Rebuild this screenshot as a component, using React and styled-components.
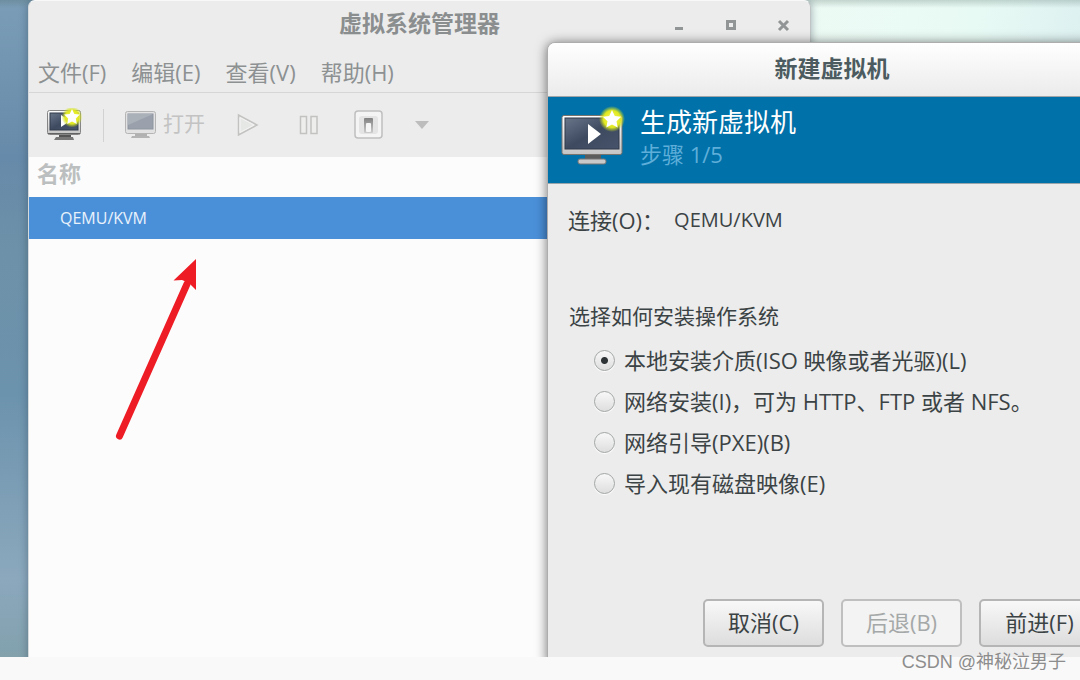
import React from 'react';
import styled, { createGlobalStyle, css } from 'styled-components';

const GlobalStyle = createGlobalStyle`
  *, *::before, *::after { box-sizing: border-box; }
  body {
    margin: 0;
    background: #f9f9f9;
    font-family: 'Open Sans', 'Noto Sans CJK SC', sans-serif;
    font-size: 22px;
    line-height: 30px;
    color: #3b4345;
  }
  button, input { font: inherit; color: inherit; }
`;

const Page = styled.div`
  position: relative;
  display: flex;
  flex-direction: column;
  height: 100vh;
  overflow: hidden;
`;

const Desktop = styled.main`
  position: relative;
  flex: 1;
  overflow: hidden;
  background:
    linear-gradient(to bottom, rgba(70, 100, 90, 0.25), transparent 8px),
    linear-gradient(100deg, transparent 40%, #f0fbf5 60%, #e8faf4 82%, #d7ecef 96%),
    linear-gradient(to bottom, #7b9db7 0%, #668aa9 24%, #6d91a8 38%, #6c93ad 60%, #8ba8bd 88%, #82a1ad 100%);
`;

const Footer = styled.footer`
  height: 23px;
  background: #f9f9f9;
`;

const Watermark = styled.span`
  position: absolute;
  right: 14px;
  bottom: 6px;
  font-family: 'Liberation Sans', 'Noto Sans CJK SC', sans-serif;
  font-size: 18px;
  line-height: 24px;
  color: #8d8d8d;
  white-space: nowrap;
`;

const Window = styled.section`
  position: absolute;
  display: flex;
  flex-direction: column;
  background: #ececec;
`;

const ManagerWindow = styled(Window)`
  top: 0;
  bottom: -8px;
  left: 28px;
  width: 783px;
  border: 1px solid #c0c4c4;
  border-top-color: #f8f8f8;
  border-left-color: #d5dadd;
  border-radius: 7px 7px 0 0;
  overflow: hidden;
  box-shadow: 0 0 8px rgba(30, 50, 70, 0.4);
`;

const DialogWindow = styled(Window)`
  top: 42px;
  bottom: -8px;
  left: 547px;
  width: 570px;
  border: 1px solid #adadad;
  border-radius: 8px 8px 0 0;
  overflow: hidden;
  box-shadow: 0 1px 12px rgba(0, 0, 0, 0.55);
`;

const TitleBar = styled.header`
  display: grid;
  grid-template-columns: 1fr auto 1fr;
  align-items: center;
  height: 48px;
`;

const WindowTitle = styled.h1`
  grid-column: 2;
  margin: 0;
  padding-bottom: 4px;
  font-size: 23px;
  line-height: 30px;
  font-weight: 700;
  color: ${(p) => p.$color};
`;

const WindowControls = styled.div`
  display: flex;
  justify-content: flex-end;
  gap: 32px;
  padding-right: 17px;
`;

const bareButton = css`
  display: flex;
  align-items: center;
  justify-content: center;
  padding: 0;
  border: 0;
  background: none;
`;

const ControlButton = styled.button`
  ${bareButton}
  width: 20px;
  height: 20px;
`;

const MenuBar = styled.nav`
  display: flex;
  gap: 25px;
  height: 44px;
  padding: 8px 9px 0;
  border-bottom: 1px solid #d6d6d6;
`;

const MenuButton = styled.button`
  ${bareButton}
  height: 30px;
  color: #8d9192;
`;

const Toolbar = styled.div`
  display: flex;
  align-items: center;
  height: 64px;
  padding-left: 18px;
`;

const ToolButton = styled.button`
  ${bareButton}
  gap: 6px;
  height: 40px;
  margin-right: ${(p) => p.$after}px;
  font-size: 21px;
  color: #c3c3c3;
`;

const ToolLabel = styled.span`
  padding-bottom: 4px;
`;

const Separator = styled.span`
  width: 1px;
  height: 33px;
  margin-right: 21px;
  background: #d2d2d2;
`;

const ConnectionTable = styled.table`
  width: 100%;
  border-collapse: collapse;
  text-align: left;
`;

const ListArea = styled.div`
  flex: 1;
  background: #fcfcfc;
`;

const HeadCell = styled.th`
  height: 40px;
  padding: 0 8px 8px;
  font-weight: 700;
  color: #bcbfbf;
`;

const ConnectionCell = styled.td`
  height: 42px;
  padding: 0 31px;
  background: #4a90d9;
  color: #e9f2fb;
  font-size: 16px;
`;

const DialogTitleBar = styled(TitleBar)`
  height: 54px;
  border-bottom: 1px solid #a0a6a8;
  background: linear-gradient(#ffffff, #ebebeb);
`;

const Banner = styled.div`
  display: flex;
  align-items: flex-start;
  gap: 14px;
  height: 87px;
  padding: 9px 13px;
  border-bottom: 1px solid #98a5ab;
  background: #0071a9;
`;

const BannerTitle = styled.h2`
  margin: 0;
  font-size: 26px;
  line-height: 32px;
  font-weight: 400;
  color: #ffffff;
`;

const BannerStep = styled.p`
  margin: 0;
  line-height: 32px;
  color: #5eaed9;
`;

const DialogBody = styled.div`
  flex: 1;
  display: flex;
  flex-direction: column;
  padding: 21px 16px 17px 20px;
`;

const ConnectionLine = styled.div`
  display: flex;
  gap: 10px;
`;

const ConnectionValue = styled.output`
  font-size: 20px;
`;

const InstallOptions = styled.fieldset`
  display: flex;
  flex-direction: column;
  min-width: 0;
  margin: 66px 0 0;
  padding: 0;
  border: 0;
`;

const OptionsLegend = styled.legend`
  margin-bottom: 9px;
  padding: 0 0 0 1px;
  font-size: 21px;
`;

const Option = styled.label`
  display: flex;
  align-items: center;
  gap: 9px;
  height: 41px;
  padding-left: 26px;
  white-space: nowrap;
`;

const OptionText = styled.span`
  padding-bottom: 2px;
`;

const Radio = styled.input`
  appearance: none;
  width: 21px;
  height: 21px;
  margin: 0;
  border: 1px solid #a3a6a6;
  border-radius: 50%;
  background: linear-gradient(#f8f8f8, #dedede);
  box-shadow: 0 1px 1px #ffffff;

  &:checked {
    background: radial-gradient(circle, #2e3436 0 3px, transparent 4px), linear-gradient(#f8f8f8, #dedede);
  }
`;

const Actions = styled.div`
  display: flex;
  justify-content: flex-end;
  gap: 17px;
  margin-top: auto;
`;

const ActionButton = styled.button`
  width: 121px;
  height: 48px;
  padding: 0 0 2px;
  border: 2px solid #b5b5b5;
  border-radius: 5px;
  background: linear-gradient(#f8f8f8, #dddddd);

  &:disabled {
    border-color: #bfbfbf;
    background: #f3f3f3;
    color: #a5a8a8;
  }
`;

const PointerArrow = styled.svg`
  position: absolute;
  top: 256px;
  left: 112px;
`;

function Star() {
  return (
    <g>
      <circle cx="51" cy="13" r="13" fill="url(#glow)" />
      <path
        d="M51 4l2.8 5.9 6.4.8-4.7 4.5 1.2 6.4-5.7-3.1-5.7 3.1 1.2-6.4-4.7-4.5 6.4-.8z"
        fill="#fff"
      />
    </g>
  );
}

function Gradients() {
  return (
    <svg width="0" height="0" display="block" aria-hidden="true">
      <defs>
        <radialGradient id="glow">
          <stop offset="0" stopColor="#f8f860" />
          <stop offset=".65" stopColor="#dfe820" />
          <stop offset="1" stopColor="#c8dc20" stopOpacity="0" />
        </radialGradient>
        <linearGradient id="frame" x1="0" y1="0" x2="0" y2="1">
          <stop offset="0" stopColor="#ffffff" />
          <stop offset="1" stopColor="#c4c4c4" />
        </linearGradient>
        <linearGradient id="screen" x1="0" y1="0" x2="1" y2="1">
          <stop offset="0" stopColor="#69768a" />
          <stop offset=".5" stopColor="#3d4a60" />
          <stop offset="1" stopColor="#46536a" />
        </linearGradient>
        <linearGradient id="switchFace" x1="0" y1="0" x2="0" y2="1">
          <stop offset="0" stopColor="#808080" />
          <stop offset="1" stopColor="#cdcdcd" />
        </linearGradient>
      </defs>
    </svg>
  );
}

function NewMachineLarge() {
  return (
    <svg width="65" height="60" viewBox="0 0 65 60" aria-hidden="true">
      <path d="M24 49h16v5H24z" fill="#5c5c5c" />
      <rect x="17" y="53" width="28" height="5" rx="2" fill="#c9c9c9" stroke="#747474" />
      <rect x="1" y="9.500" width="60" height="39" rx="2" fill="url(#frame)" stroke="#77736f" />
      <rect x="4" y="12" width="54" height="31" fill="url(#screen)" stroke="#303a4a" />
      <path d="M27 18v20l13-10z" fill="#fff" />
      <Star />
    </svg>
  );
}

function NewMachineSmall() {
  return (
    <svg width="36" height="34" viewBox="0 0 36 34" aria-hidden="true">
      <path d="M12 26h12v3H12z" fill="#555" />
      <path d="M9 29h17l1 3H7z" fill="#777" />
      <rect x=".500" y="2.500" width="33" height="24" rx="2" fill="url(#frame)" stroke="#858585" />
      <path d="M1 25.500h32" stroke="#626262" />
      <rect x="3" y="5" width="28" height="17" fill="url(#screen)" stroke="#303a4a" />
      <path d="M14 7v12l9-6z" fill="#fff" />
      <circle cx="25" cy="9" r="10.500" fill="url(#glow)" />
      <path d="M25 1l2.300 4.900 5.500.7-4 3.900 1 5.500-4.800-2.600-4.800 2.600 1-5.500-4-3.900 5.500-.7z" fill="#fff" />
    </svg>
  );
}

function MonitorIcon() {
  return (
    <svg width="32" height="30" viewBox="0 0 32 30" aria-hidden="true">
      <path d="M10 23h12v3H10z" fill="#b1b1b1" />
      <path d="M7 26h17l1 2H6z" fill="#b4b4b4" />
      <rect x=".500" y="1.500" width="30" height="22" rx="2" fill="#e2e2e2" stroke="#b5b5b5" />
      <rect x="3" y="4" width="25" height="15" fill="#9aa1ac" stroke="#8d949f" />
      <path d="M3 4h25L3 15z" fill="#abb1b9" />
    </svg>
  );
}

function PlayIcon() {
  return (
    <svg width="22" height="24" viewBox="0 0 22 24" aria-hidden="true">
      <path d="M1.500 2v20L20 12z" fill="#e6e8e6" stroke="#c2c2c0" strokeWidth="1.500" />
      <path d="M3 4.500v15L17 12z" fill="none" stroke="#f4f4f4" />
    </svg>
  );
}

function PauseIcon() {
  return (
    <svg width="20" height="20" viewBox="0 0 20 20" aria-hidden="true">
      <path d="M1.500 1.500h6v17h-6zM12 1.500h6v17h-6z" fill="#eeeeec" stroke="#c2c2c0" strokeWidth="1.500" />
    </svg>
  );
}

function PowerIcon() {
  return (
    <svg width="29" height="31" viewBox="0 0 29 31" aria-hidden="true">
      <rect x="1" y="1" width="27" height="27" rx="3" fill="#f4f4f4" stroke="#bfbfbf" strokeWidth="1.500" />
      <rect x="5" y="6" width="19" height="18" rx="3" fill="#e4e4e4" />
      <rect x="10" y="8" width="9" height="15" rx="1" fill="url(#switchFace)" />
      <rect x="12" y="13" width="5" height="9" rx="1" fill="#f5f5f5" />
    </svg>
  );
}

function CaretIcon() {
  return (
    <svg width="14" height="8" viewBox="0 0 14 8" aria-hidden="true">
      <path d="M0 0h14L7 8z" fill="#bdbdbd" />
    </svg>
  );
}

const controls = [
  { name: '最小化', mark: <path d="M6 13.500h8" strokeWidth="3" /> },
  { name: '最大化', mark: <path d="M6.500 6.500h7v7h-7z" strokeWidth="3" /> },
  { name: '关闭', mark: <path d="M6 6l9 9M15 6l-9 9" strokeWidth="3" /> },
];

const menus = ['文件(F)', '编辑(E)', '查看(V)', '帮助(H)'];

const installOptions = [
  { id: 'local', label: '本地安装介质(ISO 映像或者光驱)(L)' },
  { id: 'network', label: '网络安装(I)，可为 HTTP、FTP 或者 NFS。' },
  { id: 'pxe', label: '网络引导(PXE)(B)' },
  { id: 'import', label: '导入现有磁盘映像(E)' },
];

function Manager() {
  return (
    <ManagerWindow aria-label="虚拟系统管理器">
      <TitleBar>
        <WindowTitle $color="#8b8e8f">虚拟系统管理器</WindowTitle>
        <WindowControls>
          {controls.map((c) => (
            <ControlButton key={c.name} type="button" aria-label={c.name}>
              <svg width="20" height="20" viewBox="0 0 20 20" fill="none" stroke="#929595" aria-hidden="true">
                {c.mark}
              </svg>
            </ControlButton>
          ))}
        </WindowControls>
      </TitleBar>
      <MenuBar>
        {menus.map((m) => (
          <MenuButton key={m} type="button">{m}</MenuButton>
        ))}
      </MenuBar>
      <Toolbar>
        <ToolButton type="button" aria-label="新建虚拟机" $after={20}><NewMachineSmall /></ToolButton>
        <Separator />
        <ToolButton type="button" disabled $after={32}><MonitorIcon /><ToolLabel>打开</ToolLabel></ToolButton>
        <ToolButton type="button" disabled aria-label="运行" $after={40}><PlayIcon /></ToolButton>
        <ToolButton type="button" disabled aria-label="暂停" $after={35}><PauseIcon /></ToolButton>
        <ToolButton type="button" disabled aria-label="关机" $after={32}><PowerIcon /></ToolButton>
        <ToolButton type="button" disabled aria-label="关机选项" $after={0}><CaretIcon /></ToolButton>
      </Toolbar>
      <ListArea>
        <ConnectionTable>
          <thead>
            <tr><HeadCell scope="col">名称</HeadCell></tr>
          </thead>
          <tbody>
            <tr><ConnectionCell>QEMU/KVM</ConnectionCell></tr>
          </tbody>
        </ConnectionTable>
      </ListArea>
    </ManagerWindow>
  );
}

function NewMachineDialog() {
  return (
    <DialogWindow role="dialog" aria-label="新建虚拟机">
      <DialogTitleBar>
        <WindowTitle $color="#4c5b60">新建虚拟机</WindowTitle>
      </DialogTitleBar>
      <Banner>
        <NewMachineLarge />
        <div>
          <BannerTitle>生成新虚拟机</BannerTitle>
          <BannerStep>步骤 1/5</BannerStep>
        </div>
      </Banner>
      <DialogBody>
        <ConnectionLine>
          <label htmlFor="connection">连接(O)：</label>
          <ConnectionValue id="connection">QEMU/KVM</ConnectionValue>
        </ConnectionLine>
        <InstallOptions>
          <OptionsLegend>选择如何安装操作系统</OptionsLegend>
          {installOptions.map((o, i) => (
            <Option key={o.id} htmlFor={o.id}>
              <Radio type="radio" name="install" id={o.id} defaultChecked={i === 0} />
              <OptionText>{o.label}</OptionText>
            </Option>
          ))}
        </InstallOptions>
        <Actions>
          <ActionButton type="button">取消(C)</ActionButton>
          <ActionButton type="button" disabled>后退(B)</ActionButton>
          <ActionButton type="button">前进(F)</ActionButton>
        </Actions>
      </DialogBody>
    </DialogWindow>
  );
}

export default function App() {
  return (
    <Page>
      <GlobalStyle />
      <Gradients />
      <Desktop>
        <Manager />
        <PointerArrow width="90" height="188" viewBox="0 0 90 188" aria-hidden="true">
          <path d="M7.500 180L75 28" stroke="#ee1c25" strokeWidth="7" strokeLinecap="round" />
          <path d="M84 3v31l-7-7-7-3-8.500.5z" fill="#ee1c25" />
        </PointerArrow>
        <NewMachineDialog />
      </Desktop>
      <Footer />
      <Watermark>CSDN @神秘泣男子</Watermark>
    </Page>
  );
}
